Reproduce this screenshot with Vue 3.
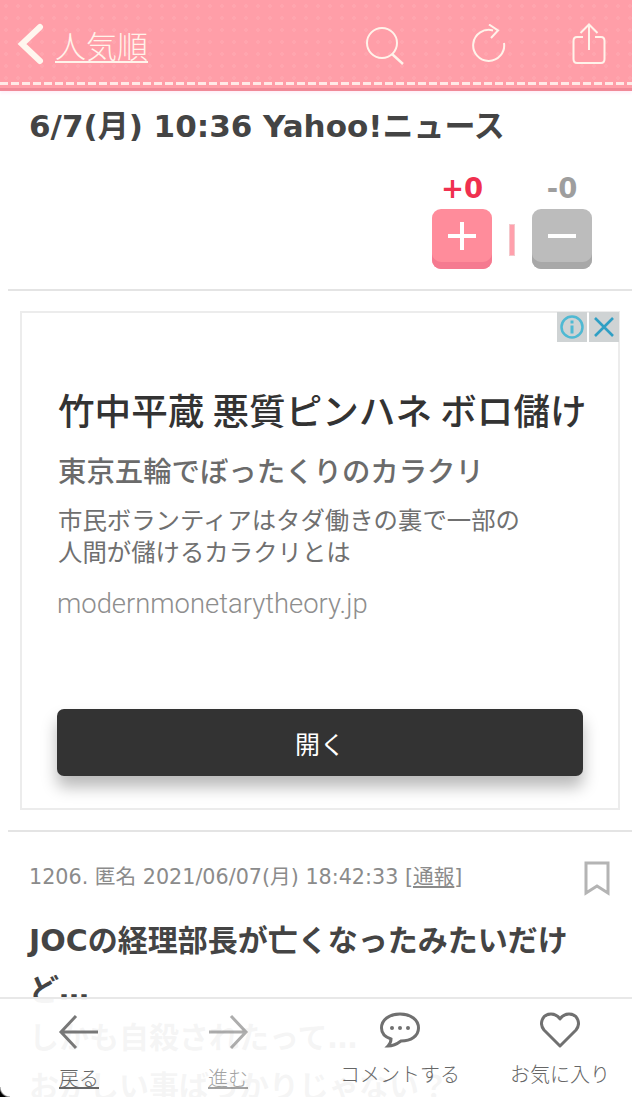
<template>
  <div class="page">
    <header class="topbar">
      <a class="back">
        <svg class="chevron" width="28" height="44" viewBox="0 0 28 44">
          <path d="M24 5 L6 22 L24 39" fill="none" stroke="#fff6ee" stroke-width="6" stroke-linecap="round" stroke-linejoin="miter" />
        </svg>
        <span class="back-label">人気順</span>
      </a>
      <div class="top-icons">
        <svg width="40" height="46" viewBox="0 0 40 46">
          <circle cx="16" cy="22" r="15" fill="none" stroke="#fff3ea" stroke-width="2" />
          <path d="M26 33 L37 43" stroke="#fff3ea" stroke-width="2.400" fill="none" />
        </svg>
        <svg width="34" height="40" viewBox="0 0 34 40">
          <path d="M21 6.500 A15.500 15.500 0 1 0 32 19" fill="none" stroke="#fff3ea" stroke-width="2" />
          <path d="M17 0.500 L26 6.500 L19 14" fill="none" stroke="#fff3ea" stroke-width="2" />
        </svg>
        <svg width="34" height="42" viewBox="0 0 34 42">
          <path d="M11 14 H5 Q1.500 14 1.500 18 V36 Q1.500 40 5 40 H29 Q32.500 40 32.500 36 V18 Q32.500 14 29 14 H23" fill="none" stroke="#fff3ea" stroke-width="2" />
          <path d="M17 27 V2 M8.500 10 L17 1.500 L25.500 10" fill="none" stroke="#fff3ea" stroke-width="2" />
        </svg>
      </div>
    </header>

    <main class="content">
      <h1 class="source">6/7(月) 10:36 Yahoo!ニュース</h1>

      <div class="votes">
        <div class="vote">
          <span class="count plus">+0</span>
          <button class="vote-btn plus-btn">
            <svg width="30" height="30" viewBox="0 0 30 30"><path d="M15 1 V29 M1 15 H29" stroke="#fff" stroke-width="4" /></svg>
          </button>
        </div>
        <div class="ratio"></div>
        <div class="vote">
          <span class="count minus">-0</span>
          <button class="vote-btn minus-btn">
            <svg width="30" height="30" viewBox="0 0 30 30"><path d="M1 15 H29" stroke="#fff" stroke-width="4" /></svg>
          </button>
        </div>
      </div>

      <section class="ad-wrap">
        <div class="ad">
          <div class="ad-badges">
            <span class="badge">
              <svg width="26" height="26" viewBox="0 0 26 26">
                <circle cx="13" cy="13" r="10.500" fill="none" stroke="#4fb9d3" stroke-width="2.500" />
                <path d="M13 6.500 V9.500 M13 11.500 V19.500" stroke="#4fb9d3" stroke-width="3" />
              </svg>
            </span>
            <span class="badge">
              <svg width="26" height="26" viewBox="0 0 26 26">
                <path d="M4 4 L22 22 M22 4 L4 22" stroke="#2f9fc4" stroke-width="2.600" />
              </svg>
            </span>
          </div>
          <h2 class="ad-title">竹中平蔵 悪質ピンハネ ボロ儲け</h2>
          <p class="ad-sub">東京五輪でぼったくりのカラクリ</p>
          <p class="ad-desc">市民ボランティアはタダ働きの裏で一部の<br />人間が儲けるカラクリとは</p>
          <p class="ad-domain">modernmonetarytheory.jp</p>
          <button class="ad-open">開く</button>
        </div>
      </section>

      <article class="comment">
        <div class="comment-meta">
          <span>1206. 匿名 2021/06/07(月) 18:42:33 [<u>通報</u>]</span>
          <svg class="bookmark" width="26" height="36" viewBox="0 0 26 36">
            <path d="M2 2 H24 V32 L13 25 L2 32 Z" fill="none" stroke="#b4b4b4" stroke-width="3" />
          </svg>
        </div>
        <p class="comment-body">
          JOCの経理部長が亡くなったみたいだけど…<br />
          しかも自殺されたって…<br />
          おかしい事ばっかりじゃない？
        </p>
      </article>
    </main>

    <nav class="bottombar">
      <a class="nav-item arrow-item">
        <svg width="44" height="36" viewBox="0 0 44 36"><path d="M41 18 H4 M19 2 L4 18 L19 34" fill="none" stroke="#777" stroke-width="3" /></svg>
        <u>戻る</u>
      </a>
      <a class="nav-item arrow-item faded">
        <svg width="44" height="36" viewBox="0 0 44 36"><path d="M3 18 H40 M25 2 L40 18 L25 34" fill="none" stroke="#777" stroke-width="3" /></svg>
        <u>進む</u>
      </a>
      <a class="nav-item">
        <svg width="40" height="36" viewBox="0 0 40 36">
          <path d="M20 2 C31 2 38.500 8 38.500 16 C38.500 24 31 29 21 29 C17 32 13 34 8 34 C10 32 11 30 11 27 C5 25 1.500 21 1.500 16 C1.500 8 9 2 20 2 Z" fill="none" stroke="#707070" stroke-width="3" />
          <circle cx="12" cy="16" r="2" fill="#707070" /><circle cx="20" cy="16" r="2" fill="#707070" /><circle cx="28" cy="16" r="2" fill="#707070" />
        </svg>
        <span>コメントする</span>
      </a>
      <a class="nav-item">
        <svg width="40" height="36" viewBox="0 0 40 36">
          <path d="M20 34 L4 18 C-1 12 2 2 11 2 C15 2 18 4 20 7 C22 4 25 2 29 2 C38 2 41 12 36 18 Z" fill="none" stroke="#707070" stroke-width="3" stroke-linejoin="round" />
        </svg>
        <span>お気に入り</span>
      </a>
    </nav>
  </div>
</template>

<script setup>
</script>

<style>
html,
body {
  margin: 0;
  height: 100%;
  overflow: hidden;
  background: #fff;
}
</style>

<style scoped>
.page {
  position: relative;
  width: 632px;
  height: 1097px;
  overflow: hidden;
  background: #fff;
  color: #444;
  font-family: "DejaVu Sans", "Noto Sans CJK JP", sans-serif;
}

/* device corner that shows in the screenshot */
.page::after {
  content: '';
  position: absolute;
  left: 0;
  bottom: 0;
  width: 10px;
  height: 10px;
  background: radial-gradient(circle at 100% 0, transparent 9px, #000 11px);
}

.topbar {
  position: absolute;
  top: 0;
  left: 0;
  right: 0;
  height: 91px;
  display: flex;
  align-items: center;
  justify-content: space-between;
  padding: 0 26px 0 16px;
  box-sizing: border-box;
  background-color: #ff9ea8;
  background-image: radial-gradient(rgba(255, 255, 255, 0.07) 2px, transparent 2px);
  background-size: 12px 12px;
  border-bottom: 3px solid #f08a98;
  box-shadow: 0 2px 3px rgba(255, 170, 220, 0.2);
}

.topbar::after {
  content: '';
  position: absolute;
  left: 0;
  right: 0;
  bottom: 3px;
  height: 3px;
  background: repeating-linear-gradient(90deg, #ffe9e6 0 8px, transparent 8px 11px);
}

.back {
  display: flex;
  align-items: center;
  gap: 11px;
}

.back-label {
  font-family: "Noto Sans CJK JP", sans-serif;
  font-size: 31px;
  font-weight: 300;
  color: #fff3ea;
  text-decoration: underline;
  text-underline-offset: 3px;
  text-decoration-thickness: 2px;
}

.top-icons {
  display: flex;
  align-items: center;
  gap: 66px;
}

.content {
  padding-top: 105px;
}

.source {
  margin: 0;
  padding-left: 29px;
  font-size: 31px;
  line-height: 42px;
  font-weight: 700;
  color: #444;
  white-space: nowrap;
}

.votes {
  display: flex;
  justify-content: flex-end;
  align-items: flex-end;
  padding: 25px 40px 20px 0;
  border-bottom: 2px solid #e4e4e4;
  margin-left: 8px;
}

.vote {
  display: flex;
  flex-direction: column;
  align-items: center;
  gap: 5px;
}

.count {
  font-size: 27.500px;
  line-height: 32px;
  font-weight: 700;
}

.plus {
  color: #f0304f;
}

.minus {
  color: #9e9e9e;
}

.vote-btn {
  width: 60px;
  height: 60px;
  border: 0;
  border-radius: 9px;
  padding: 0 0 6px;
  display: flex;
  align-items: center;
  justify-content: center;
}

.plus-btn {
  background: #ff8c9b;
  box-shadow: inset 0 -7px 0 #f57a90;
}

.minus-btn {
  background: #bcbcbc;
  box-shadow: inset 0 -7px 0 #a8a8a8;
}

.ratio {
  width: 6px;
  height: 32px;
  margin: 0 17px 13px;
  background: #ffa0ac;
  border: 1px solid #f4c8cc;
  box-sizing: border-box;
}

.ad-wrap {
  margin-left: 8px;
  padding: 20px 12px 20px 12px;
  border-bottom: 2px solid #e4e4e4;
}

.ad {
  position: relative;
  height: 495px;
  border: 2px solid #ececec;
  box-sizing: content-box;
  width: 596px;
  padding: 0;
  display: flex;
  flex-direction: column;
  align-items: flex-start;
  font-family: "Noto Sans CJK JP", sans-serif;
}

.ad-badges {
  position: absolute;
  top: -1px;
  right: -1px;
  display: flex;
  gap: 2px;
}

.badge {
  width: 30px;
  height: 30px;
  background: #cfd3d4;
  display: flex;
  align-items: center;
  justify-content: center;
}

.ad-title {
  margin: 73px 0 0 36px;
  font-size: 36.600px;
  line-height: 48px;
  font-weight: 500;
  color: #333;
  white-space: nowrap;
}

.ad-sub {
  margin: 17px 0 0 36px;
  font-size: 28.400px;
  line-height: 38px;
  font-weight: 500;
  color: #6b6b6b;
}

.ad-desc {
  margin: 14px 0 0 36px;
  font-size: 24.400px;
  line-height: 32px;
  color: #707070;
}

.ad-domain {
  margin: 20px 0 0 35px;
  font-family: Roboto, sans-serif;
  font-size: 27.400px;
  line-height: 34px;
  font-weight: 300;
  color: #8e8e8e;
}

.ad-open {
  margin: auto 0 32px 35px;
  width: 526px;
  height: 67px;
  border: 0;
  border-radius: 7px;
  background: #333;
  color: #fff;
  font-family: inherit;
  font-size: 25px;
  box-shadow: 0 11px 16px rgba(0, 0, 0, 0.28);
}

.comment {
  padding: 0 22px 0 29px;
}

.comment-meta {
  display: flex;
  justify-content: space-between;
  align-items: flex-start;
  padding-top: 29px;
  font-size: 20.700px;
  line-height: 32px;
  color: #8b8b8b;
  white-space: nowrap;
}

.bookmark {
  flex: none;
}

.comment-body {
  margin: 20px 0 0;
  font-size: 30px;
  line-height: 48.500px;
  font-weight: 700;
  color: #444;
}

.bottombar {
  position: absolute;
  left: 0;
  right: 0;
  bottom: 0;
  height: 100px;
  display: grid;
  grid-template-columns: 158px 140px 204px 116px;
  padding-right: 14px;
  box-sizing: border-box;
  border-top: 2px solid #e8e8e8;
  background: rgba(255, 255, 255, 0.95);
}

.nav-item {
  display: flex;
  flex-direction: column;
  align-items: center;
  gap: 12px;
  padding-top: 13px;
  font-family: "Noto Sans CJK JP", sans-serif;
  font-size: 20px;
  line-height: 28px;
  color: #666;
  font-weight: 300;
  white-space: nowrap;
}

.arrow-item {
  padding-top: 15px;
  gap: 14px;
}

.faded {
  opacity: 0.6;
}
</style>
